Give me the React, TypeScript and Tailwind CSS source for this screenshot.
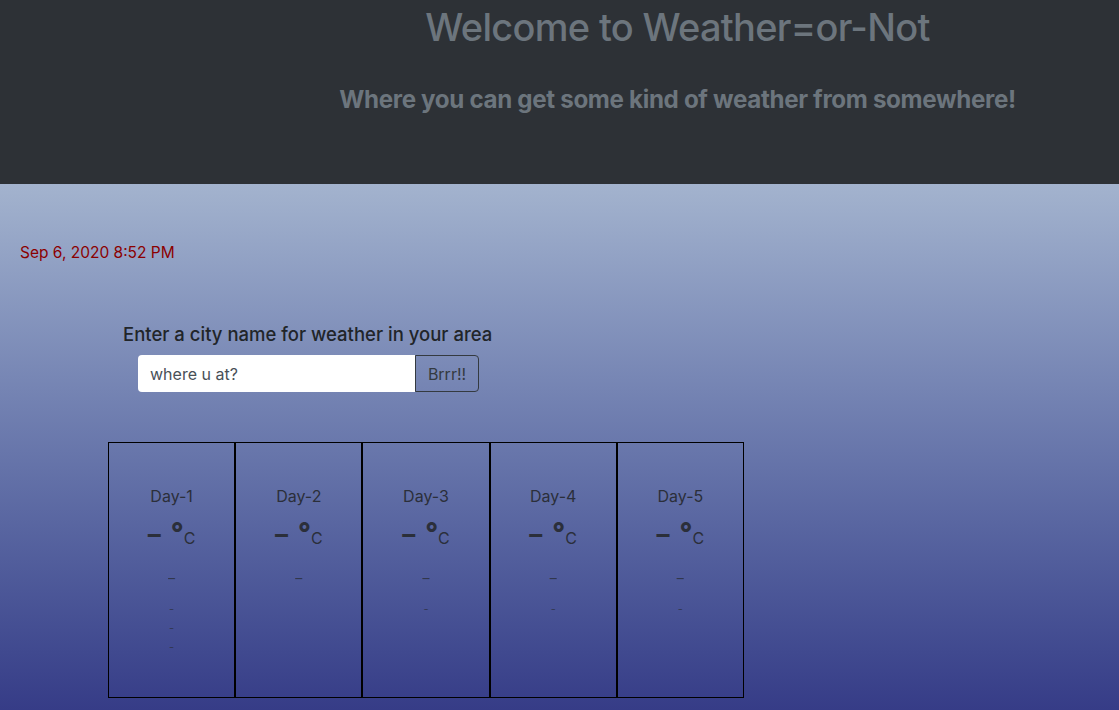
const days = [
  { name: "Day-1", extra: ["-", "-", "-"] },
  { name: "Day-2", extra: [] },
  { name: "Day-3", extra: ["-"] },
  { name: "Day-4", extra: ["-"] },
  { name: "Day-5", extra: ["-"] },
]

function DayCard({ day }: { day: (typeof days)[number] }) {
  return (
    <div className="w-[127.2px] h-[256px] border border-black flex flex-col items-center pt-[42px] text-[#2b2f3a]">
      <div className="text-[16px] leading-[22px]">{day.name}</div>
      <div className="mt-[12px] flex items-start h-[30px]">
        <span className="text-[26px] font-bold leading-[30px]">–</span>
        <span className="ml-[10px] text-[28px] font-extrabold leading-[22px] mt-[3px]">°</span>
        <span className="text-[16px] leading-[16px] mt-[11px]">C</span>
      </div>
      <div className="mt-[19px] text-[14px] leading-[20px] opacity-80">–</div>
      <div className="mt-[12px] flex flex-col items-center">
        {day.extra.map((x, i) => (
          <div key={i} className="text-[11px] leading-[19px] opacity-70">
            {x}
          </div>
        ))}
      </div>
    </div>
  )
}

export default function App() {
  return (
    <div className="w-[1119px] h-[710px] overflow-hidden font-['Inter',sans-serif]">
      <header className="h-[184px] bg-[#2d3136] flex flex-col items-center pl-[236px]">
        <h1 className="mt-[3px] text-[38px] leading-[48px] font-medium text-[#6c757d] tracking-[-0.7px]">
          Welcome to Weather=or-Not
        </h1>
        <h4 className="mt-[34px] text-[24.2px] leading-[29px] font-bold text-[#6c757d] tracking-[-0.35px]">
          Where you can get some kind of weather from somewhere!
        </h4>
      </header>
      <main className="h-[526px] bg-gradient-to-b from-[#a3b3ce] to-[#363c87] pt-[58px]">
        <div className="pl-[20px] text-[15.5px] leading-[22px] text-[#8b0000]">Sep 6, 2020 8:52 PM</div>
        <div className="mt-[58px] pl-[123px]">
          <div className="text-[18.5px] leading-[24px] font-medium text-[#212529]">
            Enter a city name for weather in your area
          </div>
          <div className="mt-[9px] ml-[15px] flex">
            <input
              className="w-[277px] h-[37px] bg-white rounded-l-[4px] px-[12px] text-[16px] text-[#495057] placeholder-[#495057] outline-none"
              placeholder="where u at?"
            />
            <button className="h-[37px] w-[64px] border border-[#343a40] rounded-r-[4px] text-[16px] text-[#343a40] bg-transparent">
              Brrr!!
            </button>
          </div>
        </div>
        <div className="mt-[50px] ml-[108px] flex">
          {days.map((d) => (
            <DayCard key={d.name} day={d} />
          ))}
        </div>
      </main>
    </div>
  )
}
